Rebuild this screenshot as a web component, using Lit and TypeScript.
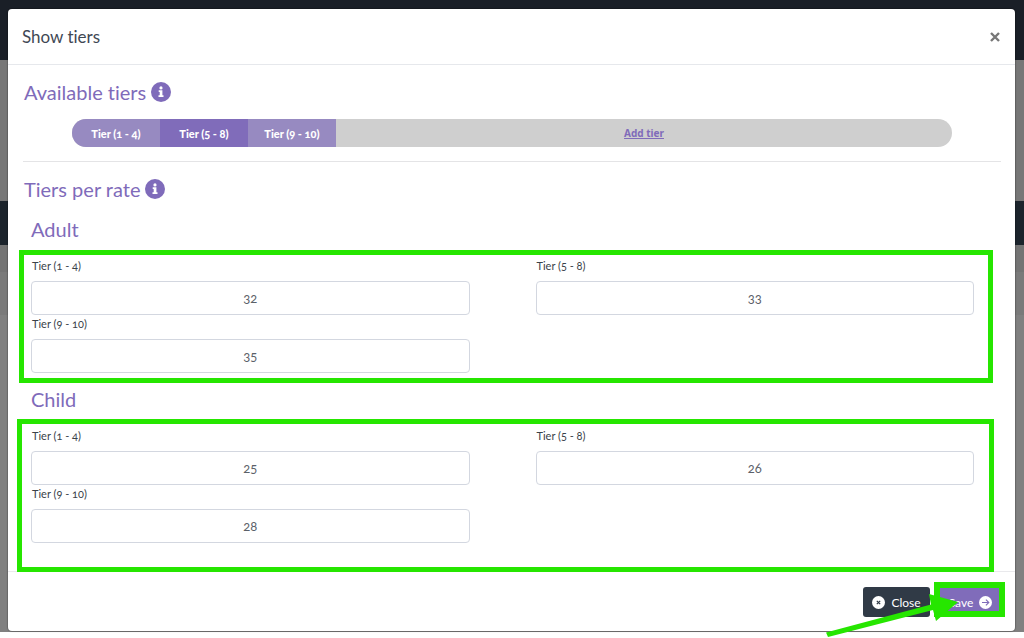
import { LitElement, html, css, svg } from "lit";
import { customElement, property } from "lit/decorators.js";

interface Tier {
  from: number;
  to: number;
}

interface Rate {
  name: string;
  values: number[];
}

const TIERS: Tier[] = [
  { from: 1, to: 4 },
  { from: 5, to: 8 },
  { from: 9, to: 10 },
];

const RATES: Rate[] = [
  { name: "Adult", values: [32, 33, 35] },
  { name: "Child", values: [25, 26, 28] },
];

const tierLabel = (t: Tier) => `Tier (${t.from} - ${t.to})`;

const infoIcon = html`
  <svg class="info" viewBox="0 0 20 20" aria-hidden="true">
    <circle cx="10" cy="10" r="10" fill="#7f6bba" />
    <circle cx="10" cy="5.9" r="1.6" fill="#fff" />
    <path d="M7.7 8.3h3.7v4.9h1.1v1.7H7.5v-1.7h1.2V10h-1z" fill="#fff" />
  </svg>
`;

const roundIcon = (glyph: unknown) => html`
  <svg class="round" viewBox="0 0 13 13" aria-hidden="true">
    <circle cx="6.5" cy="6.5" r="6.5" fill="#fff" />
    ${glyph}
  </svg>
`;

@customElement("tier-rate")
export class TierRate extends LitElement {
  @property({ attribute: false }) rate!: Rate;
  @property({ attribute: false }) tiers: Tier[] = [];

  static styles = css`
    :host {
      display: block;
    }
    .name {
      margin: 0;
      font-size: 20px;
      line-height: 24px;
      font-weight: 400;
      color: #7f6bba;
    }
    .fields {
      position: relative;
      display: grid;
      grid-template-columns: 1fr 1fr;
      column-gap: 66px;
      margin-top: 16px;
    }
    .label {
      display: block;
      padding-left: 1px;
      margin-bottom: 6px;
      font-size: 11px;
      line-height: 18px;
      color: #3a4249;
    }
    .input {
      display: block;
      box-sizing: border-box;
      width: 100%;
      height: 34px;
      padding: 0 8px;
      border: 1px solid #d3d7e0;
      border-radius: 4px;
      background: #fff;
      font: inherit;
      font-size: 13px;
      font-variant-numeric: inherit;
      text-align: center;
      color: #5b6169;
    }
    .mark {
      position: absolute;
      inset: -7px -19px -10px -12px;
      border: 5px solid #26e600;
      pointer-events: none;
    }
    :host(.last) .mark {
      inset: -8px -20px -29px -14px;
    }
  `;

  render() {
    return html`
      <h3 class="name">${this.rate.name}</h3>
      <div class="fields">
        ${this.tiers.map((tier, i) => {
          const id = `${this.rate.name}-${i}`;
          return html`
            <div>
              <label class="label" for=${id}>${tierLabel(tier)}</label>
              <input class="input" id=${id} type="text" inputmode="numeric" .value=${String(this.rate.values[i])} />
            </div>
          `;
        })}
        <div class="mark"></div>
      </div>
    `;
  }
}

@customElement("app-root")
export class AppRoot extends LitElement {
  static styles = css`
    :host {
      display: block;
      min-height: 100vh;
      background: #fff;
      font-family: Lato, "Open Sans", sans-serif;
      font-variant-numeric: oldstyle-nums;
      font-variant-ligatures: none;
      color: #3a4249;
    }
    .backdrop {
      padding: 9px 9px 1px 8px;
      background: linear-gradient(
        #1a1f27 60px,
        #777 60px 201px,
        #1c242c 201px 245px,
        #747474 245px 272px,
        #7a7a7a 272px 315px,
        #808080 315px
      );
    }
    .modal {
      background: #fff;
      border-radius: 4px;
      box-shadow: 0 0 1px 1px rgba(0, 0, 0, 0.2);
    }
    .header {
      display: flex;
      align-items: center;
      justify-content: space-between;
      height: 55px;
      padding: 0 14px;
      border-bottom: 1px solid #e6e8ec;
    }
    .title {
      margin: 0;
      font-size: 17px;
      font-weight: 400;
      line-height: 24px;
      color: #3f4854;
    }
    .dismiss {
      display: flex;
      padding: 0;
      border: 0;
      background: none;
    }
    .cross {
      width: 12px;
      height: 12px;
    }
    .body {
      padding: 15px 14px 28px 15px;
    }
    .heading {
      display: flex;
      align-items: center;
      gap: 5px;
      margin: 0 1px;
      font-size: 20px;
      font-weight: 400;
      line-height: 24px;
      color: #7f6bba;
    }
    .info {
      width: 20px;
      height: 20px;
    }
    .bar {
      display: flex;
      height: 28px;
      margin: 15px 5% 14px;
      border-radius: 14px;
      overflow: hidden;
      background: #cfcfcf;
    }
    .segment {
      flex: 0 0 10%;
      padding: 0;
      border: 0;
      background: #978ac1;
      font: inherit;
      font-size: 11px;
      font-weight: 900;
      font-variant-numeric: inherit;
      font-variant-ligatures: inherit;
      color: #fff;
    }
    .segment.active {
      background: #806cba;
    }
    .rest {
      flex: 1;
      display: flex;
      align-items: center;
      justify-content: center;
    }
    .add {
      font-family: "Noto Sans", sans-serif;
      font-size: 10px;
      font-weight: 700;
      color: #7f6bba;
    }
    .rule {
      height: 1px;
      margin: 0 0 15px;
      border: 0;
      background: #e4e4e6;
    }
    .rates {
      display: grid;
      gap: 14px;
      padding: 16px 27px 0 8px;
    }
    .footer {
      display: flex;
      justify-content: flex-end;
      gap: 7px;
      padding: 15px 11px 14px;
      border-top: 1px solid #e9e9ec;
    }
    .button {
      display: flex;
      align-items: center;
      justify-content: center;
      gap: 6px;
      width: 67px;
      height: 30px;
      padding: 0;
      border: 0;
      border-radius: 3px;
      font: inherit;
      font-size: 12px;
      color: #fff;
      background: #303a46;
    }
    .button.primary {
      background: #806cba;
    }
    .round {
      width: 13px;
      height: 13px;
    }
    .save {
      position: relative;
    }
    .mark {
      position: absolute;
      inset: -5px -1px 0 -3px;
      border: 6px solid #26e600;
      pointer-events: none;
    }
    .arrow {
      position: absolute;
      left: -113px;
      top: 3px;
      width: 136px;
      height: 48px;
      pointer-events: none;
    }
  `;

  render() {
    return html`
      <div class="backdrop">
        <div class="modal" role="dialog" aria-labelledby="title">
          <header class="header">
            <h1 class="title" id="title">Show tiers</h1>
            <button class="dismiss" type="button" aria-label="Close dialog">
              <svg class="cross" viewBox="0 0 12 12">
                <path d="M2 2l8 8M10 2l-8 8" stroke="#777" stroke-width="2.4" />
              </svg>
            </button>
          </header>

          <div class="body">
            <h2 class="heading">Available tiers ${infoIcon}</h2>
            <div class="bar">
              ${TIERS.map(
                (t, i) => html`<button type="button" class="segment ${i === 1 ? "active" : ""}">${tierLabel(t)}</button>`
              )}
              <div class="rest"><a class="add" href="#">Add tier</a></div>
            </div>
            <hr class="rule" />
            <h2 class="heading">Tiers per rate ${infoIcon}</h2>
            <div class="rates">
              ${RATES.map(
                (r, i) => html`<tier-rate
                  class=${i === RATES.length - 1 ? "last" : ""}
                  .rate=${r}
                  .tiers=${TIERS}
                ></tier-rate>`
              )}
            </div>
          </div>

          <footer class="footer">
            <button class="button" type="button">
              ${roundIcon(svg`<path d="M4.8 4.8l3.4 3.4M8.2 4.8L4.8 8.2" stroke="#303a46" stroke-width="1.2"/>`)}
              Close
            </button>
            <div class="save">
              <button class="button primary" type="button">
                Save
                ${roundIcon(
                  svg`<path d="M3 6.5h6.6M6.9 3.6l2.9 2.9-2.9 2.9" fill="none" stroke="#806cba" stroke-width="1.1"/>`
                )}
              </button>
              <div class="mark"></div>
              <svg class="arrow" viewBox="0 0 136 48" aria-hidden="true">
                <path d="M2 42.5L107 14.5 105 4l29 8-22 19-3-11L4 47z" fill="#26e600" />
              </svg>
            </div>
          </footer>
        </div>
      </div>
    `;
  }
}
